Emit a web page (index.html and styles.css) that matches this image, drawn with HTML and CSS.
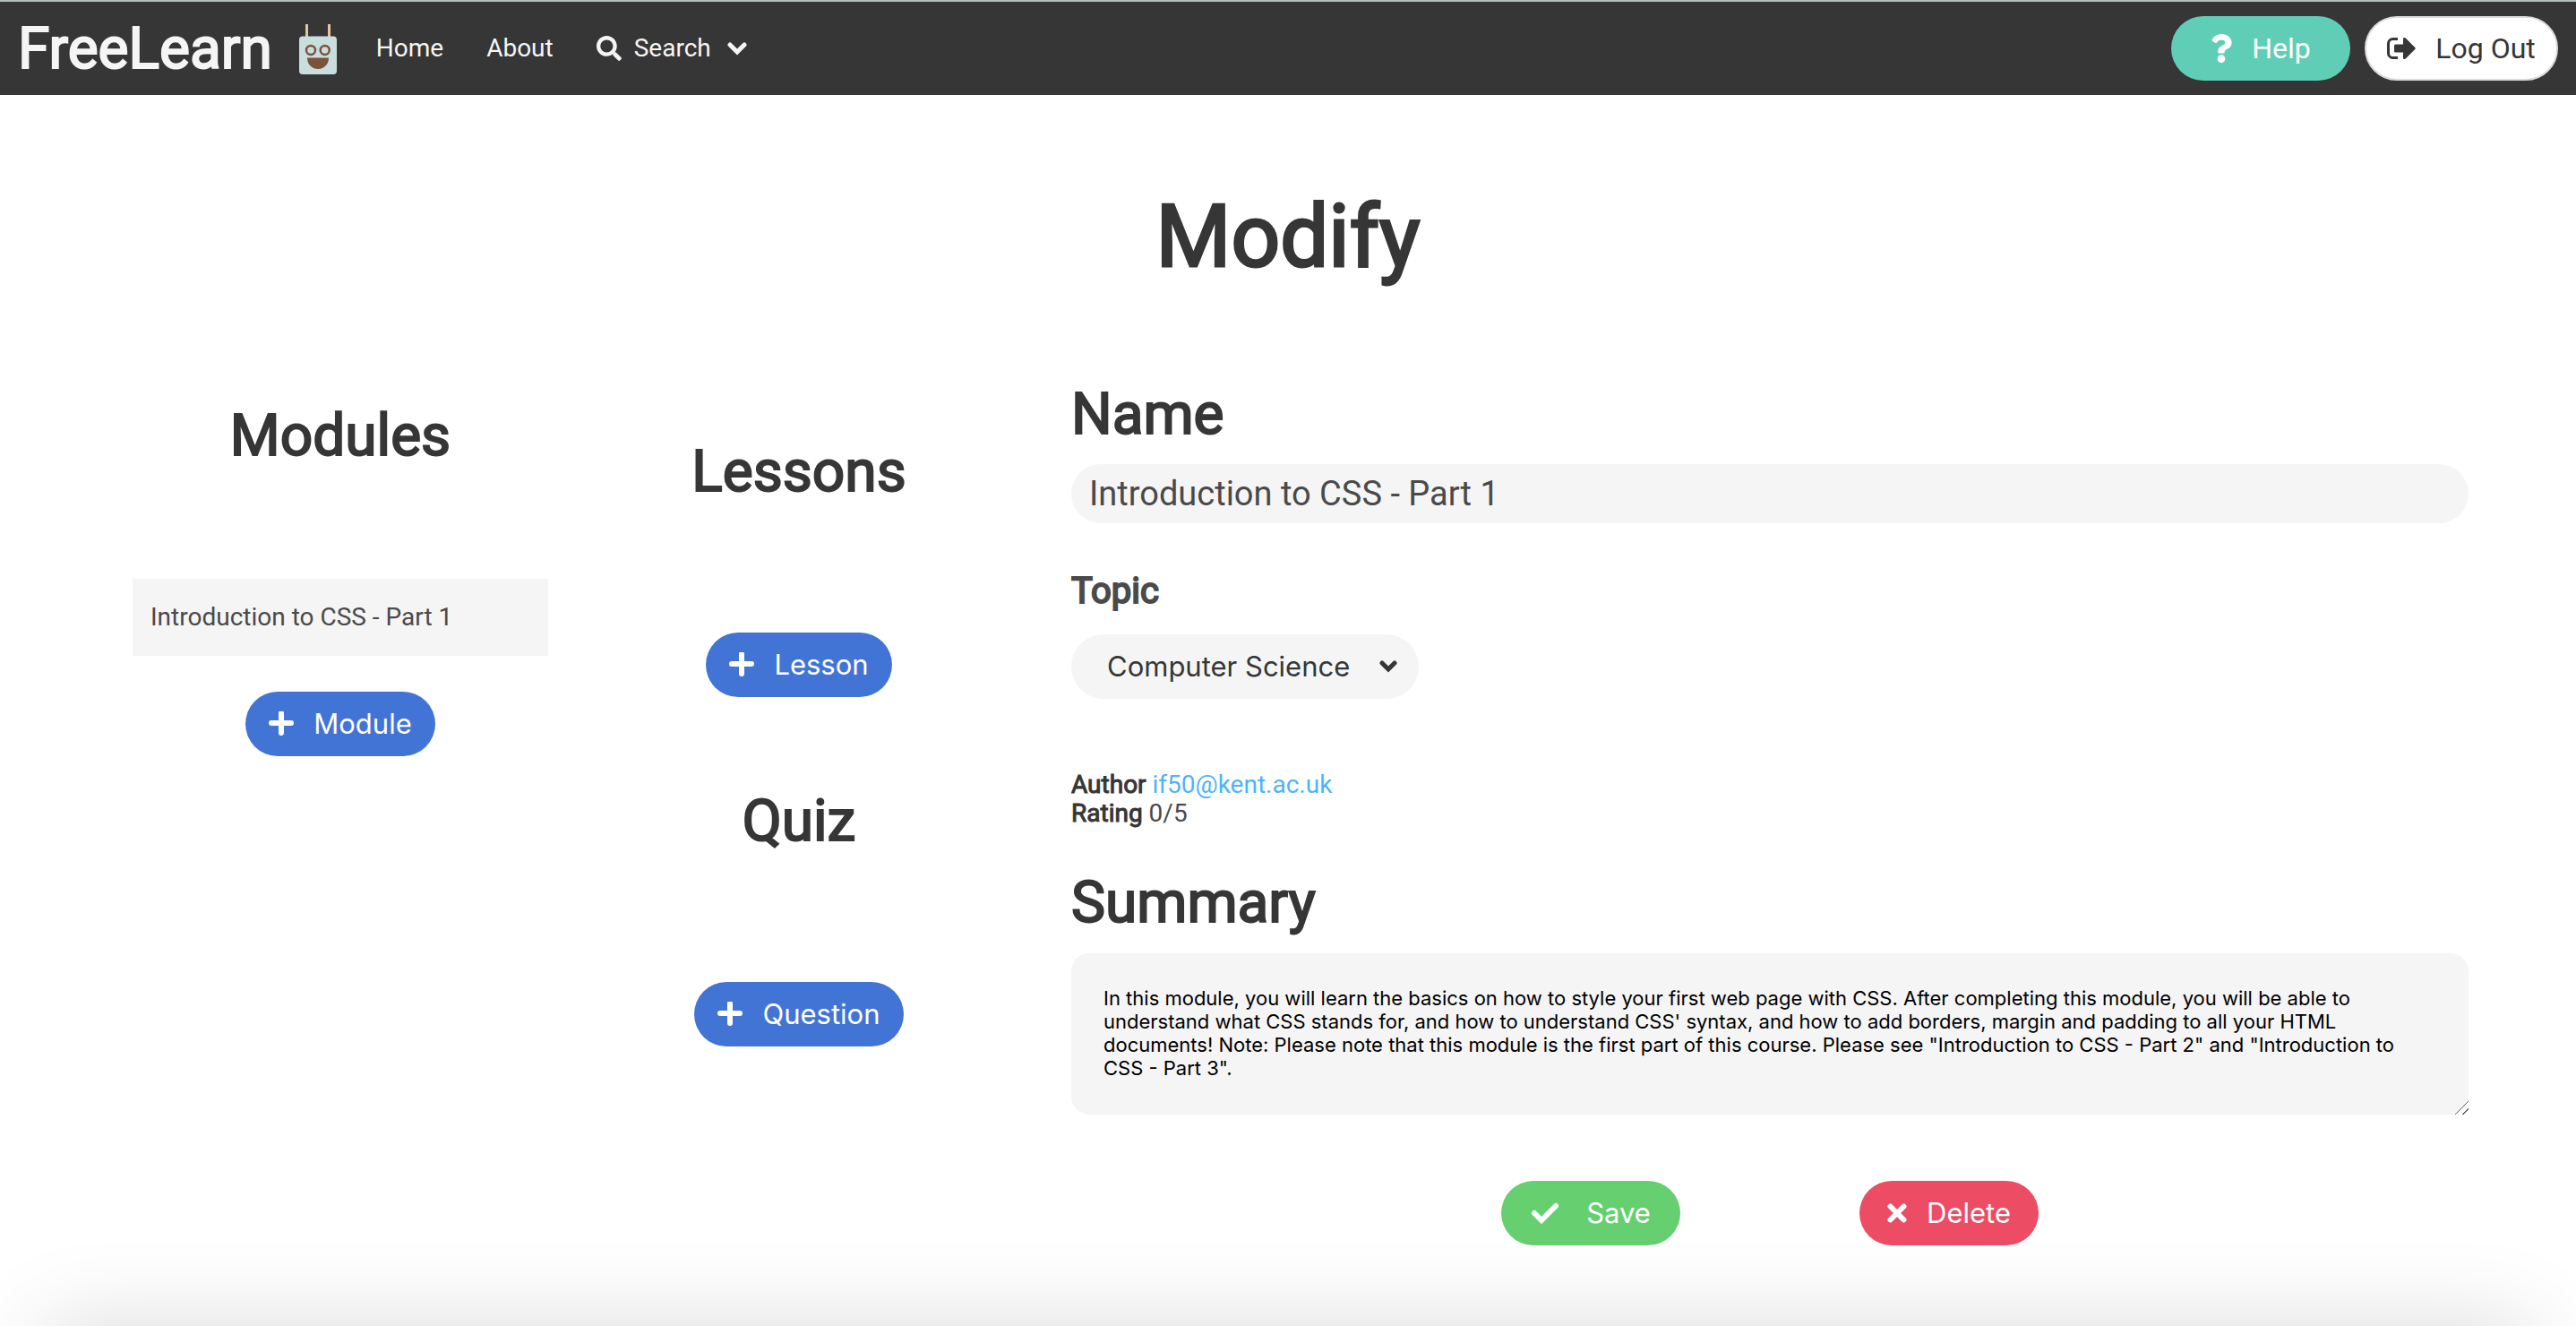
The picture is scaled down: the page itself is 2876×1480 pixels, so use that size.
FILE: index.html
```html
<!DOCTYPE html>
<html lang="en">
<head>
<meta charset="utf-8">
<meta name="viewport" content="width=device-width, initial-scale=1">
<title>FreeLearn - Modify</title>
<link rel="stylesheet" href="styles.css">
</head>
<body>
<div class="page">
  <header class="navbar">
    <a class="brand" href="#">FreeLearn
      <svg class="brand-logo" viewBox="0 0 42 56" aria-hidden="true">
        <path d="M8.500 0v14M33.500 0v14" stroke="#e3c79b" stroke-width="3"/>
        <rect y="13.500" width="42" height="42.500" rx="4" fill="#c9dfdd"/>
        <circle cx="13" cy="29" r="5" fill="none" stroke="#7b533d" stroke-width="2.500"/>
        <circle cx="28.700" cy="29" r="5" fill="none" stroke="#7b533d" stroke-width="2.500"/>
        <path d="M9 37.500h24v.500a12 12 0 0 1-24 0z" fill="#7b533d"/>
      </svg>
    </a>
    <nav class="links">
      <a class="link" href="#">Home</a>
      <a class="link" href="#">About</a>
      <a class="link link-search" href="#">
        <svg class="icon-search" viewBox="0 0 512 512" aria-hidden="true"><path fill="currentColor" d="M505 442.700L405.300 343c-4.500-4.500-10.600-7-17-7H372c27.600-35.300 44-79.700 44-128C416 93.100 322.900 0 208 0S0 93.100 0 208s93.100 208 208 208c48.300 0 92.700-16.400 128-44v16.300c0 6.400 2.500 12.500 7 17l99.700 99.700c9.400 9.400 24.600 9.400 33.900 0l28.300-28.300c9.400-9.400 9.400-24.600.1-34zM208 336c-70.700 0-128-57.200-128-128 0-70.700 57.200-128 128-128 70.700 0 128 57.200 128 128 0 70.700-57.200 128-128 128z"/></svg>
        Search
        <svg class="icon-chevron" viewBox="0 0 22 16" aria-hidden="true"><path d="M3 4l8 8 8-8" fill="none" stroke="currentColor" stroke-width="5" stroke-linecap="round"/></svg>
      </a>
    </nav>
    <div class="actions">
      <button class="button help" type="button">
        <svg class="icon-help" viewBox="0 0 384 512" aria-hidden="true"><path fill="currentColor" d="M202.021 0C122.202 0 70.503 32.703 29.914 91.026c-7.363 10.580-5.093 25.086 5.178 32.874l43.138 32.709c10.373 7.865 25.132 6.026 33.253-4.148 25.049-31.381 43.630-49.449 82.757-49.449 30.764 0 68.816 19.799 68.816 49.631 0 22.552-18.617 34.134-48.993 51.164-35.423 19.860-82.299 44.576-82.299 106.405V320c0 13.255 10.745 24 24 24h72.471c13.255 0 24-10.745 24-24v-5.773c0-42.860 125.268-44.645 125.268-160.627C377.504 66.256 286.902 0 202.021 0zM192 373.459c-38.196 0-69.271 31.075-69.271 69.271 0 38.195 31.075 69.270 69.271 69.270s69.271-31.075 69.271-69.271-31.075-69.270-69.271-69.270z"/></svg>
        Help
      </button>
      <button class="button logout" type="button">
        <svg class="icon-logout" viewBox="0 0 32 24" aria-hidden="true"><path d="M12 1.500H6.500a5 5 0 0 0-5 5v11a5 5 0 0 0 5 5H12" fill="none" stroke="currentColor" stroke-width="3"/><path fill="currentColor" d="M8 9a1.500 1.500 0 0 1 1.500-1.500H18V1.500C18 0 19.500-.5 20.700.6l10.500 10.300a1.500 1.500 0 0 1 0 2.200L20.700 23.400c-1.200 1.100-2.700.6-2.700-.9v-6H9.500A1.500 1.500 0 0 1 8 15z"/></svg>
        Log Out
      </button>
    </div>
  </header>

  <main class="content">
    <h1 class="page-title">Modify</h1>
    <div class="columns">
      <section class="column modules">
        <h2 class="heading">Modules</h2>
        <a class="module" href="#">Introduction to CSS - Part 1</a>
        <button class="button add" type="button">
          <svg class="icon-plus" viewBox="0 0 28 28" aria-hidden="true"><path d="M14 2v22M3 13h22" stroke="currentColor" stroke-width="6" stroke-linecap="round"/></svg>
          Module
        </button>
      </section>

      <div class="column parts">
        <section class="part">
          <h2 class="heading">Lessons</h2>
          <button class="button add" type="button">
            <svg class="icon-plus" viewBox="0 0 28 28" aria-hidden="true"><path d="M14 2v22M3 13h22" stroke="currentColor" stroke-width="6" stroke-linecap="round"/></svg>
            Lesson
          </button>
        </section>
        <section class="part">
          <h2 class="heading">Quiz</h2>
          <button class="button add" type="button">
            <svg class="icon-plus" viewBox="0 0 28 28" aria-hidden="true"><path d="M14 2v22M3 13h22" stroke="currentColor" stroke-width="6" stroke-linecap="round"/></svg>
            Question
          </button>
        </section>
      </div>

      <form class="details">
        <label class="heading" for="name">Name</label>
        <input class="name" id="name" type="text" value="Introduction to CSS - Part 1">
        <label class="subheading" for="topic">Topic</label>
        <div class="select">
          <select class="topic" id="topic"><option>Computer Science</option></select>
          <svg class="select-arrow" viewBox="0 0 20 14" aria-hidden="true"><path d="M3 3l7 7 7-7" fill="none" stroke="currentColor" stroke-width="5" stroke-linecap="round"/></svg>
        </div>
        <div class="meta">
          <p class="meta-row"><strong class="meta-label">Author</strong> <a class="mail" href="mailto:if50@kent.ac.uk">if50@kent.ac.uk</a></p>
          <p class="meta-row"><strong class="meta-label">Rating</strong> 0/5</p>
        </div>
        <label class="heading" for="summary">Summary</label>
        <textarea class="summary" id="summary">In this module, you will learn the basics on how to style your first web page with CSS. After completing this module, you will be able to understand what CSS stands for, and how to understand CSS' syntax, and how to add borders, margin and padding to all your HTML documents! Note: Please note that this module is the first part of this course. Please see "Introduction to CSS - Part 2" and "Introduction to CSS - Part 3".</textarea>
        <div class="form-actions">
          <button class="button save" type="button">
            <svg class="icon-check" viewBox="0 0 32 26" aria-hidden="true"><path d="M4 13l8 8L28 5" fill="none" stroke="currentColor" stroke-width="6" stroke-linecap="round"/></svg>
            Save
          </button>
          <button class="button delete" type="button">
            <svg class="icon-times" viewBox="0 0 22 22" aria-hidden="true"><path d="M3.500 3.500l15 15M18.500 3.500l-15 15" stroke="currentColor" stroke-width="6" stroke-linecap="round"/></svg>
            Delete
          </button>
        </div>
      </form>
    </div>
  </main>
  <footer class="footer"></footer>
</div>
</body>
</html>
```

FILE: styles.css
```css
* {
  box-sizing: border-box;
}

body {
  margin: 0;
  background: #fff;
  color: #4a4a4a;
  font: 28px/32px Roboto, "Liberation Sans", sans-serif;
}

a {
  color: inherit;
  text-decoration: none;
}

svg {
  flex: none;
}

.page {
  display: flex;
  flex-direction: column;
  min-height: 100vh;
  overflow: hidden;
}

/* Navigation bar */
.navbar {
  display: flex;
  align-items: center;
  height: 106px;
  padding: 0 20px;
  border-top: 2px solid #b5bcbc;
  background: #363636;
  color: #f5f5f5;
}

.brand {
  display: flex;
  align-items: center;
  gap: 30px;
  padding-top: 2px;
  font-size: 64px;
  line-height: 72px;
  -webkit-text-stroke: 2px currentColor;
}

.brand-logo {
  width: 42px;
  height: 56px;
}

.links {
  display: flex;
  align-items: center;
  gap: 48px;
  margin-left: 44px;
}

.link-search {
  display: flex;
  align-items: center;
  gap: 14px;
}

.icon-search {
  width: 28px;
  height: 28px;
}

.icon-chevron {
  width: 22px;
  height: 16px;
  margin-left: 4px;
}

.actions {
  display: flex;
  gap: 16px;
  margin-left: auto;
}

/* Buttons */
.button {
  display: inline-flex;
  align-items: center;
  justify-content: center;
  gap: 22px;
  height: 72px;
  padding: 0 26px;
  border: 0;
  border-radius: 36px;
  color: #fff;
  font: 31px/48px Inter, "Liberation Sans", sans-serif;
}

.help,
.logout {
  font-family: Roboto, "Liberation Sans", sans-serif;
  font-size: 32px;
}

.help {
  width: 200px;
  background: #60ceb6;
}

.icon-help {
  width: 24px;
  height: 32px;
}

.logout {
  width: 216px;
  padding: 0;
  border: 2px solid #dbdbdb;
  background: #fff;
  color: #363636;
}

.icon-logout {
  width: 32px;
  height: 24px;
}

.add {
  background: #4274d6;
}

.icon-plus {
  width: 28px;
  height: 28px;
}

.save,
.delete {
  width: 200px;
}

.save {
  gap: 30px;
  background: #66cf70;
}

.delete {
  background: #ec4c64;
}

.icon-check {
  width: 32px;
  height: 26px;
}

.icon-times {
  width: 22px;
  height: 22px;
}

/* Content */
.content {
  padding: 104px 120px 90px;
}

.page-title {
  margin: 0;
  color: #363636;
  font-size: 96px;
  font-weight: 400;
  line-height: 108px;
  text-align: center;
  -webkit-text-stroke: 3px currentColor;
}

.columns {
  display: grid;
  grid-template-columns: 130fr 126fr 403fr;
  align-items: start;
  margin-top: 105px;
}

.heading {
  margin: 0;
  color: #363636;
  font-size: 64px;
  font-weight: 400;
  line-height: 72px;
  -webkit-text-stroke: 2px currentColor;
}

.column {
  display: flex;
  flex-direction: column;
  align-items: center;
}

.modules {
  padding: 28px;
}

.module {
  width: 100%;
  margin: 123px 0 40px;
  padding: 27px 20px;
  background: #f5f5f5;
}

.parts {
  gap: 103px;
  padding-top: 68px;
}

.part {
  display: flex;
  flex-direction: column;
  align-items: center;
  gap: 143px;
}

.details {
  display: flex;
  flex-direction: column;
  align-items: flex-start;
  padding: 4px 0 0 52px;
}

.name {
  width: 100%;
  height: 66px;
  margin: 19px 0 52px;
  padding: 0 20px;
  border: 0;
  border-radius: 33px;
  background: #f5f5f5;
  color: #4a4a4a;
  font: 38px/44px Roboto, "Liberation Sans", sans-serif;
}

.subheading {
  font-size: 40px;
  line-height: 48px;
  -webkit-text-stroke: 2px currentColor;
}

.select {
  display: grid;
  align-items: center;
  width: 388px;
  margin: 24px 0 80px;
}

.topic,
.select-arrow {
  grid-area: 1 / 1;
}

.topic {
  height: 72px;
  padding: 0 40px;
  border: 0;
  border-radius: 36px;
  background: #f5f5f5;
  color: #363636;
  font: 31px/48px Inter, "Liberation Sans", sans-serif;
  appearance: none;
}

.select-arrow {
  justify-self: end;
  width: 20px;
  height: 14px;
  margin-right: 24px;
  color: #363636;
  pointer-events: none;
}

.meta {
  margin-bottom: 48px;
}

.meta-row {
  margin: 0;
}

.meta-label {
  color: #363636;
  font-weight: 400;
  -webkit-text-stroke: 1px currentColor;
}

.mail {
  color: #4fb3fa;
}

.summary {
  width: 100%;
  height: 180px;
  margin: 20px 0 74px;
  padding: 37px 36px;
  border: 0;
  border-radius: 20px;
  background: #f5f5f5;
  color: #000;
  font: 22px/26px Inter, "Liberation Sans", sans-serif;
}

.summary::-webkit-resizer {
  background: linear-gradient(135deg, transparent 47%, #666 47% 53%, transparent 53% 75%, #666 75% 81%, transparent 81%);
}

.form-actions {
  display: flex;
  gap: 200px;
  align-self: center;
}

/* Footer starts below the fold; only its shadow shows above it */
.footer {
  flex: none;
  height: 200px;
  margin: auto 50px -200px;
  box-shadow: 0 0 100px rgba(10, 10, 10, 0.15);
}
```
